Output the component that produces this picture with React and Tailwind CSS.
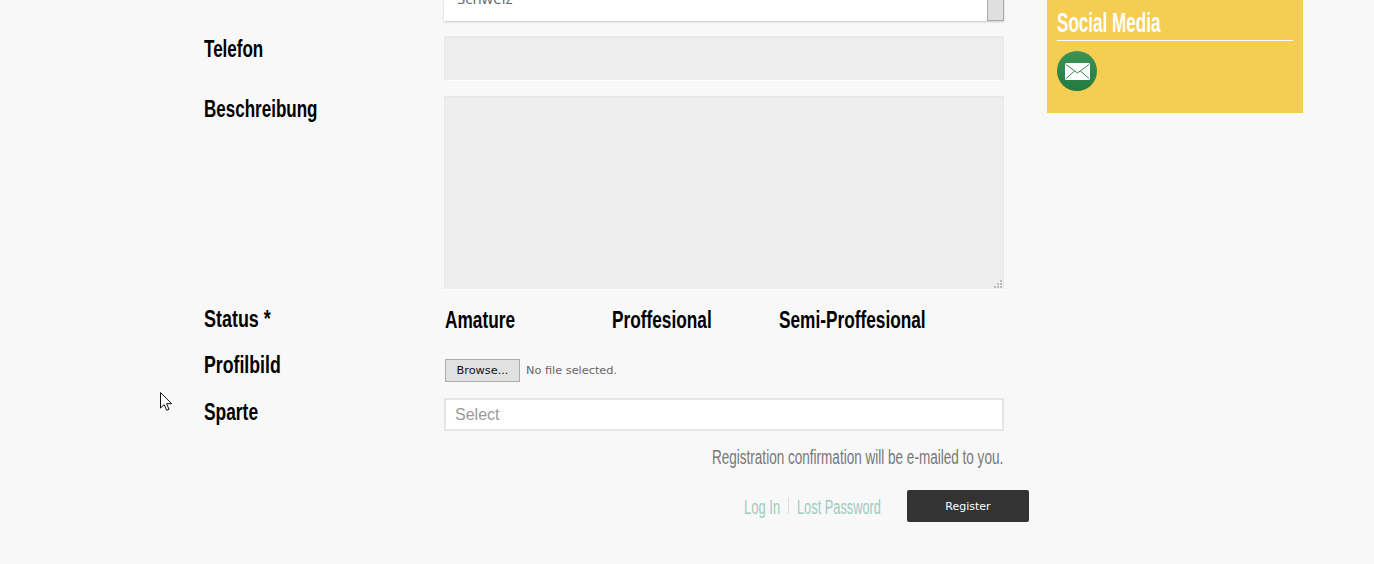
const oswald = "font-['Liberation_Sans',sans-serif]";

function Label({ children, className = "", scale = "scale-x-[0.74]" }) {
  return (
    <label className={`block w-[240px] shrink-0 text-[23px] leading-[26px] font-bold text-black whitespace-nowrap ${oswald} ${className}`}>
      <span className={`inline-block origin-left ${scale}`}>{children}</span>
    </label>
  );
}

function StatusOption({ children }) {
  return (
    <span className={`block w-[167px] pl-px text-[23px] leading-[26px] font-bold text-black whitespace-nowrap ${oswald}`}>
      <span className="inline-block origin-left scale-x-[0.75]">{children}</span>
    </span>
  );
}

function MailBadge() {
  return (
    <div className="w-10 h-10 rounded-full bg-gradient-to-b from-[#3b9455] to-[#237a42] flex items-center justify-center">
      <svg width="25" height="17" viewBox="0 0 25 17">
        <rect width="25" height="17" rx="1.5" fill="#fff" />
        <path d="M1 1.5 12.5 10 24 1.5M1 15.5l8.5-7.5M24 15.5 15.5 8" fill="none" stroke="#2f8a4e" strokeWidth="1" />
      </svg>
    </div>
  );
}

export default function App() {
  return (
    <div className="relative h-[564px] overflow-hidden bg-[#f8f8f8] flex">
      <div className="w-[1047px] shrink-0 pl-[204px]">
        <div className="flex h-[36px]">
          <div className="w-[240px] shrink-0" />
          <div className="w-[560px] h-[21px] bg-white shadow-[0_1px_2px_rgba(0,0,0,0.2)] flex justify-between overflow-hidden">
            <span className="-mt-[12px] pl-[13px] text-[15px] leading-[20px] text-[#666] font-['Open_Sans',sans-serif]">Schweiz</span>
            <div className="w-[17px] h-[21px] bg-[#dfdfdf] border border-[#a9a9a9] border-t-0" />
          </div>
        </div>

        <div className="flex h-[60px]">
          <Label>Telefon</Label>
          <input className="w-[560px] h-[45px] bg-[#eeeeee] border-t-2 border-x border-[#e8e8e8] border-b border-b-white outline-none" />
        </div>

        <div className="flex h-[208px]">
          <Label>Beschreibung</Label>
          <div className="relative w-[560px] h-[194px]">
            <textarea className="block w-full h-full bg-[#eeeeee] border-t-2 border-x border-[#e8e8e8] border-b border-b-white outline-none resize-none" />
            <svg className="absolute right-[2px] bottom-[2px]" width="8" height="8" viewBox="0 0 8 8" fill="#bdbdbd">
              <rect x="6" y="0" width="2" height="2" />
              <rect x="3" y="3" width="2" height="2" />
              <rect x="6" y="3" width="2" height="2" />
              <rect x="0" y="6" width="2" height="2" />
              <rect x="3" y="6" width="2" height="2" />
              <rect x="6" y="6" width="2" height="2" />
            </svg>
          </div>
        </div>

        <div className="flex h-[46px]">
          <Label className="pt-[2px]" scale="scale-x-[0.78]">Status *</Label>
          <div className="flex pt-[3px]">
            <StatusOption>Amature</StatusOption>
            <StatusOption>Proffesional</StatusOption>
            <StatusOption>Semi-Proffesional</StatusOption>
          </div>
        </div>

        <div className="flex h-[48px]">
          <Label className="pt-[2px]" scale="scale-x-[0.77]">Profilbild</Label>
          <div className="flex items-start pt-[9px] pl-px font-['DejaVu_Sans',sans-serif] text-[11.3px]">
            <button className="w-[75px] h-[23px] pt-px bg-[#e1e1e1] border border-[#adadad] text-[#111]">Browse...</button>
            <span className="ml-[6px] leading-[23px] text-[#666]">No file selected.</span>
          </div>
        </div>

        <div className="flex h-[46px]">
          <Label className="pt-px" scale="scale-x-[0.755]">Sparte</Label>
          <div className="w-[560px] h-[33px] bg-white border-2 border-[#e6e6e6] pl-[9px] text-[16px] leading-[29px] text-[#9a9a9a] font-['Liberation_Sans',sans-serif]">
            Select
          </div>
        </div>

        <div className="w-[799px] text-right">
          <p className={`text-[20px] leading-[26px] text-[#777] whitespace-nowrap ${oswald}`}>
            <span className="inline-block origin-right scale-x-[0.677]">Registration confirmation will be e-mailed to you.</span>
          </p>
        </div>

        <div className="mt-[20px] w-[825px] flex items-center justify-end">
          <a className={`w-[36px] pt-px text-[20px] leading-[20px] text-[#9accbd] whitespace-nowrap ${oswald}`}>
            <span className="inline-block origin-left scale-x-[0.65]">Log In</span>
          </a>
          <span className="mx-[8px] w-px h-[16px] bg-[#dddddd]" />
          <a className={`w-[84px] pt-px text-[20px] leading-[20px] text-[#9accbd] whitespace-nowrap ${oswald}`}>
            <span className="inline-block origin-left scale-x-[0.64]">Lost Password</span>
          </a>
          <button className="ml-[26px] w-[122px] h-[32px] pt-[2px] bg-[#333333] rounded-[2px] text-white text-[11px] font-['DejaVu_Sans',sans-serif]">Register</button>
        </div>
      </div>

      <aside className="w-[256px] h-[113px] bg-[#f5cd51] px-[10px] pt-[7px]">
        <h3 className={`text-[28px] leading-[32px] font-bold text-white border-b border-white pb-px whitespace-nowrap ${oswald}`}>
          <span className="inline-block origin-left scale-x-[0.61]">Social Media</span>
        </h3>
        <div className="mt-[10px]">
          <MailBadge />
        </div>
      </aside>

      <svg className="absolute left-[160px] top-[392px]" width="13" height="20" viewBox="0 0 13 20">
        <path d="M.5.5v15.5l3.7-3.4 2.4 5.7 2.4-1-2.4-5.6h5z" fill="#fff" stroke="#111" strokeWidth="1" />
      </svg>
    </div>
  );
}
